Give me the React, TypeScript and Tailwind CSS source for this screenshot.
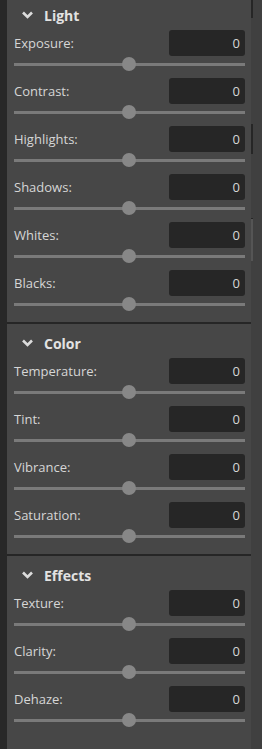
import React from 'react';

type Section = { title: string; items: string[] };

const sections: Section[] = [
  { title: 'Light', items: ['Exposure', 'Contrast', 'Highlights', 'Shadows', 'Whites', 'Blacks'] },
  { title: 'Color', items: ['Temperature', 'Tint', 'Vibrance', 'Saturation'] },
  { title: 'Effects', items: ['Texture', 'Clarity', 'Dehaze'] },
];

const Chevron = () => (
  <svg width="11" height="8" viewBox="0 0 11 8" className="shrink-0">
    <path d="M1 1.5 L5.5 6 L10 1.5" fill="none" stroke="#dcdcdc" strokeWidth="2.6" strokeLinejoin="miter" />
  </svg>
);

const Row = ({ label }: { label: string }) => (
  <div className="h-12 flex flex-col">
    <div className="flex items-center justify-between h-[26px]">
      <span className="text-[13px] text-[#d6d6d6] pt-[2px]">{label}:</span>
      <div className="w-[76px] h-[26px] rounded-[3px] bg-[#262626] flex items-center justify-end pr-[5px] pt-[2px] text-[13px] text-[#d6d6d6]">
        0
      </div>
    </div>
    {/* slider */}
    <div className="relative h-[14px] mt-[1px] flex items-center">
      <div className="w-full h-[3px] bg-[#7a7a7a]" />
      <div className="absolute left-[108px] top-0 w-[14px] h-[14px] rounded-full bg-[#878787]" />
    </div>
  </div>
);

export default function App() {
  return (
    <div
      className="w-[262px] h-[749px] overflow-hidden flex bg-[#474747]"
      style={{ fontFamily: '"Open Sans", "Liberation Sans", sans-serif' }}
    >
      <div className="w-[7px] shrink-0 bg-[#282828]" />
      <div className="w-[244px] shrink-0 -mt-1">
        {sections.map((s, i) => (
          <div key={s.title} className={i < sections.length - 1 ? 'border-b-2 border-[#262626]' : ''}>
            <div className="pl-[7px] pr-[6px] py-1">
              <div className="h-[30px] flex items-center gap-[11px] pl-[8px]">
                <Chevron />
                <span className="text-[14px] font-bold text-[#e2e2e2]">{s.title}</span>
              </div>
              {s.items.map((it) => (
                <Row key={it} label={it} />
              ))}
            </div>
          </div>
        ))}
      </div>
      {/* scrollbar column */}
      <div className="flex-1 bg-[#404040] flex flex-col">
        <div className="w-[2px] h-[18px] bg-[#262626]" />
        <div className="h-[106px]" />
        <div className="w-[2px] h-[30px] bg-[#262626]" />
        <div className="h-[64px]" />
        <div className="w-[2px] h-[1px] bg-[#262626]" />
        <div className="w-[2px] h-[42px] bg-[#555555]" />
      </div>
    </div>
  );
}
